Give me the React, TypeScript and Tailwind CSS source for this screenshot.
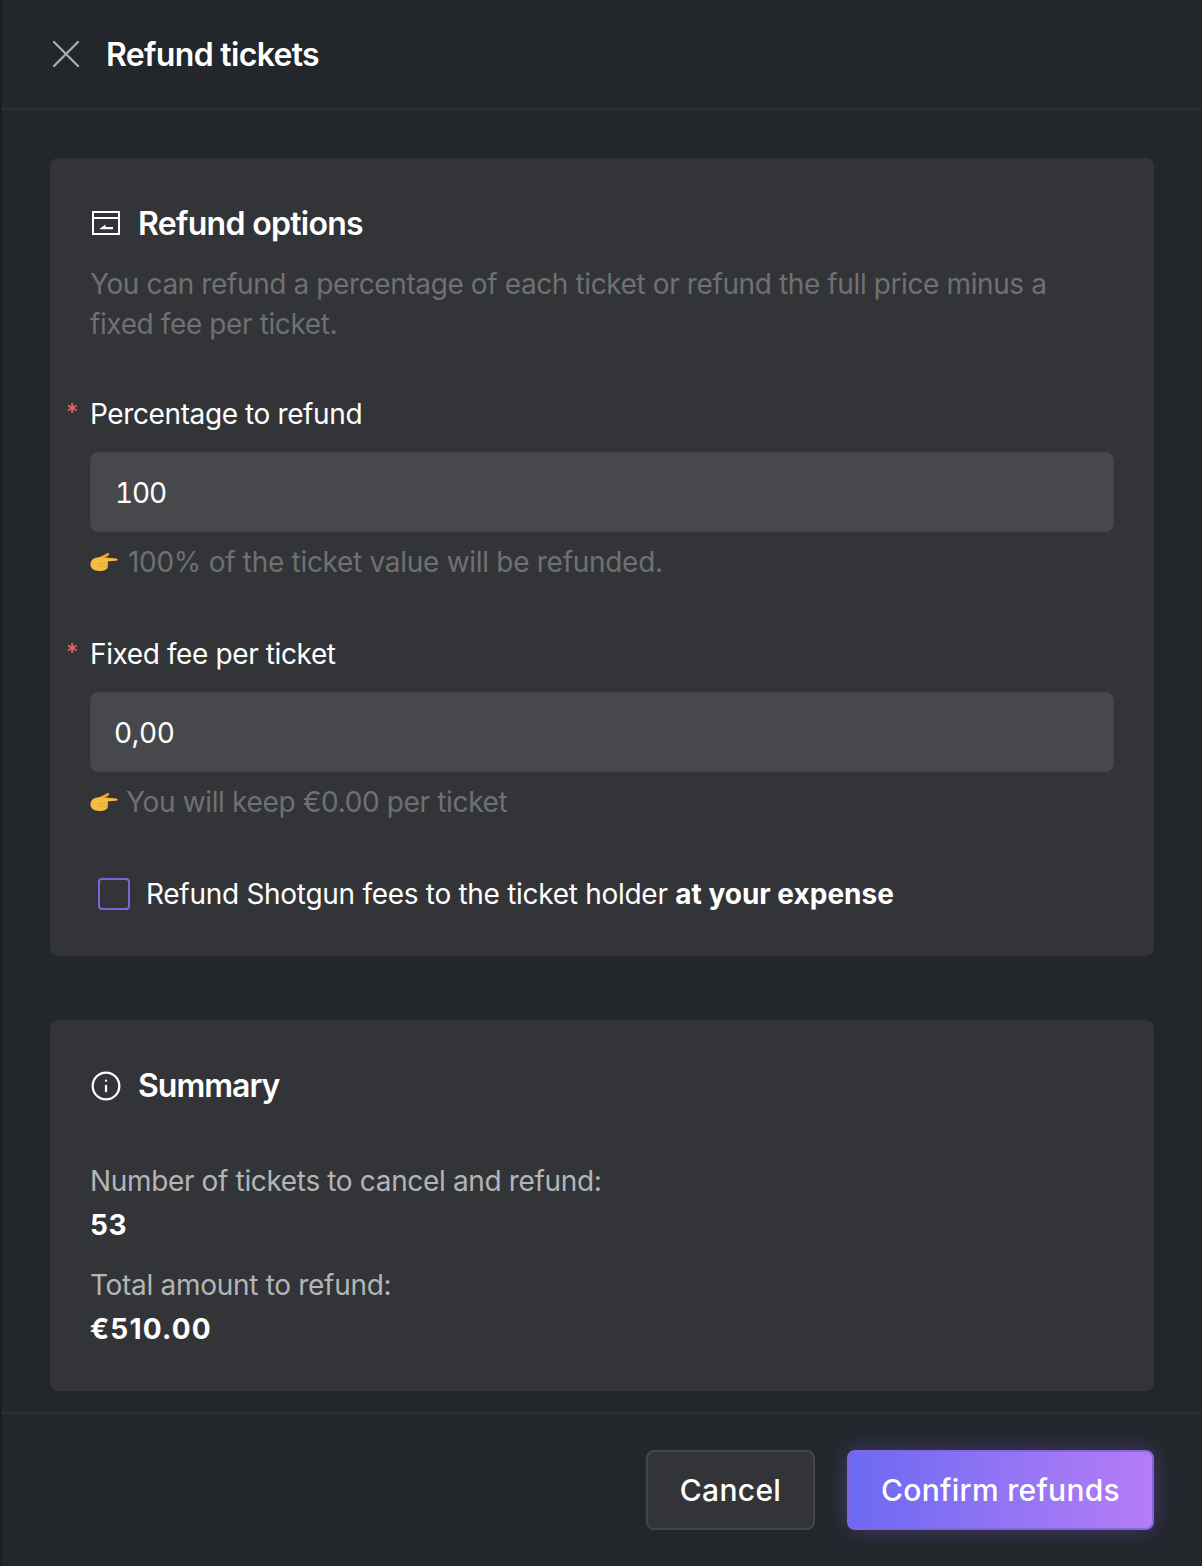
import { Info, X } from 'lucide-react';

function PointingHand() {
  return (
    <svg width="28" height="20" viewBox="0 0 28 20" aria-hidden="true" className="shrink-0">
      <path d="M8 6 L17 1.2 Q19 0.6 19.2 2.2 Q19.2 3.2 18 3.8 L14 6.5 Z" fill="#e6a52b" />
      <path d="M15 5.6 L26.6 6.4 Q28 7 27.6 8 Q27.2 8.8 26 8.8 L16 9.6 Z" fill="#f2bb3c" />
      <path d="M0.4 12 Q0.8 7 6 5.8 L11 5 Q15 5 17 7 L18 10 L17.6 16 Q15 19.4 9 19 Q0.4 18.6 0.4 12 Z" fill="#f3bd3f" />
      <path d="M9 11.4 Q13 10.6 17 11.2 M9 14.4 Q13 13.8 16.6 14.4" stroke="#cf9022" strokeWidth="0.7" strokeOpacity="0.7" fill="none" />
    </svg>
  );
}

function RefundIcon() {
  return (
    <svg width="28" height="24" viewBox="0 0 28 24" fill="none" aria-hidden="true" className="ml-[2px] mt-[-2px] shrink-0">
      <rect x="1" y="1" width="26" height="22" stroke="#fff" strokeWidth="2" />
      <path d="M2 7 H26" stroke="#fff" strokeWidth="2" />
      <path d="M8 17.5 L13.5 13.5 V16 H21 V18.2 H8 Z" fill="#fff" />
    </svg>
  );
}

function Field({
  label,
  value,
  hint,
  valueClass,
  hintClass,
}: {
  label: string;
  value: string;
  hint: string;
  valueClass: string;
  hintClass: string;
}) {
  return (
    <div>
      <div className="relative text-[28px] leading-[40px] text-white">
        <span className="absolute left-[-24px] top-[-1px] text-[24px] text-[#e8695b]">*</span>
        {label}
      </div>
      <div className={`mt-[18px] flex h-[80px] items-center rounded-lg border border-[#434448] bg-[#47484c] pt-[2px] text-[28px] text-white tabular-nums ${valueClass}`}>
        {value}
      </div>
      <div className={`mt-[10px] flex h-[40px] items-center text-[28px] text-[#6f7074] ${hintClass}`}>
        <PointingHand />
        {hint}
      </div>
    </div>
  );
}

export default function App() {
  return (
    <div className="flex h-[1566px] w-[1202px] overflow-hidden bg-[#1a1b1f] font-['Inter',sans-serif] tracking-[-0.39px]">
      <div className="w-[2px] shrink-0 bg-[#1c1d21]" />
      <div className="flex min-w-0 flex-1 flex-col bg-[#23262b]">
        <header className="flex h-[110px] shrink-0 items-center gap-[16px] border-b-2 border-[#2e2f33] pl-[40px]">
          <X size={48} strokeWidth={1.2} className="text-[#a8a9ab]" />
          <h1 className="pt-[2px] text-[32px] font-semibold tracking-[-0.67px] text-white">Refund tickets</h1>
        </header>

        <main className="flex flex-1 flex-col gap-[64px] px-[48px] pt-[48px]">
          <section className="h-[798px] rounded-lg bg-[#333438] px-[40px] pt-[46px]">
            <div className="flex h-[40px] items-center gap-[18px]">
              <RefundIcon />
              <h2 className="text-[32px] font-semibold tracking-[-0.7px] text-white">Refund options</h2>
            </div>
            <p className="mt-[20px] text-[28px] leading-[40px] text-[#6f7074]">
              You can refund a percentage of each ticket or refund the full price minus a fixed fee per ticket.
            </p>
            <div className="mt-[50px] flex flex-col gap-[52px]">
              <Field label="Percentage to refund" value="100" hint="100% of the ticket value will be refunded." valueClass="pl-[24px] tracking-[-1.2px]" hintClass="gap-[10px] tracking-[-0.29px]" />
              <Field label="Fixed fee per ticket" value="0,00" hint="You will keep €0.00 per ticket" valueClass="pl-[23px]" hintClass="gap-[8px] tracking-[-0.35px]" />
            </div>
            <div className="mt-[52px] flex items-center gap-[16px] pl-[8px]">
              <span className="h-[32px] w-[32px] rounded-[4px] border-2 border-[#7f62dc]" />
              <span className="text-[28px] leading-[40px] tracking-[-0.29px] text-white">
                Refund Shotgun fees to the ticket holder <strong className="font-bold tracking-[0px]">at your expense</strong>
              </span>
            </div>
          </section>

          <section className="h-[371px] rounded-lg bg-[#333438] px-[40px] pt-[46px]">
            <div className="flex h-[40px] items-center gap-[16px]">
              <Info size={32} strokeWidth={1.7} className="text-white" />
              <h2 className="text-[32px] font-semibold tracking-[-1px] text-white">Summary</h2>
            </div>
            <dl className="mt-[53px] text-[28px] leading-[44px]">
              <dt className="tracking-[-0.35px] text-[#b4b5b7]">Number of tickets to cancel and refund:</dt>
              <dd className="font-bold tracking-[0.6px] text-white">53</dd>
              <dt className="mt-[16px] tracking-[-0.3px] text-[#b4b5b7]">Total amount to refund:</dt>
              <dd className="font-bold tracking-[1.2px] text-white">€510.00</dd>
            </dl>
          </section>
        </main>

        <footer className="flex h-[154px] shrink-0 items-center justify-end gap-[32px] border-t-2 border-[#2e2f33] pr-[48px]">
          <button type="button" className="h-[80px] w-[169px] rounded-lg border-2 border-[#444549] bg-[#333438] text-[30px] font-medium tracking-[0.3px] text-white">
            Cancel
          </button>
          <button
            type="button"
            className="h-[80px] w-[307px] rounded-lg border-2 border-[#8663e0] bg-gradient-to-r from-[#6b69f2] to-[#b57cf6] text-[30px] font-medium tracking-[0.3px] text-white shadow-[0_0_24px_rgba(126,98,230,0.35)]"
          >
            Confirm refunds
          </button>
        </footer>
      </div>
    </div>
  );
}
